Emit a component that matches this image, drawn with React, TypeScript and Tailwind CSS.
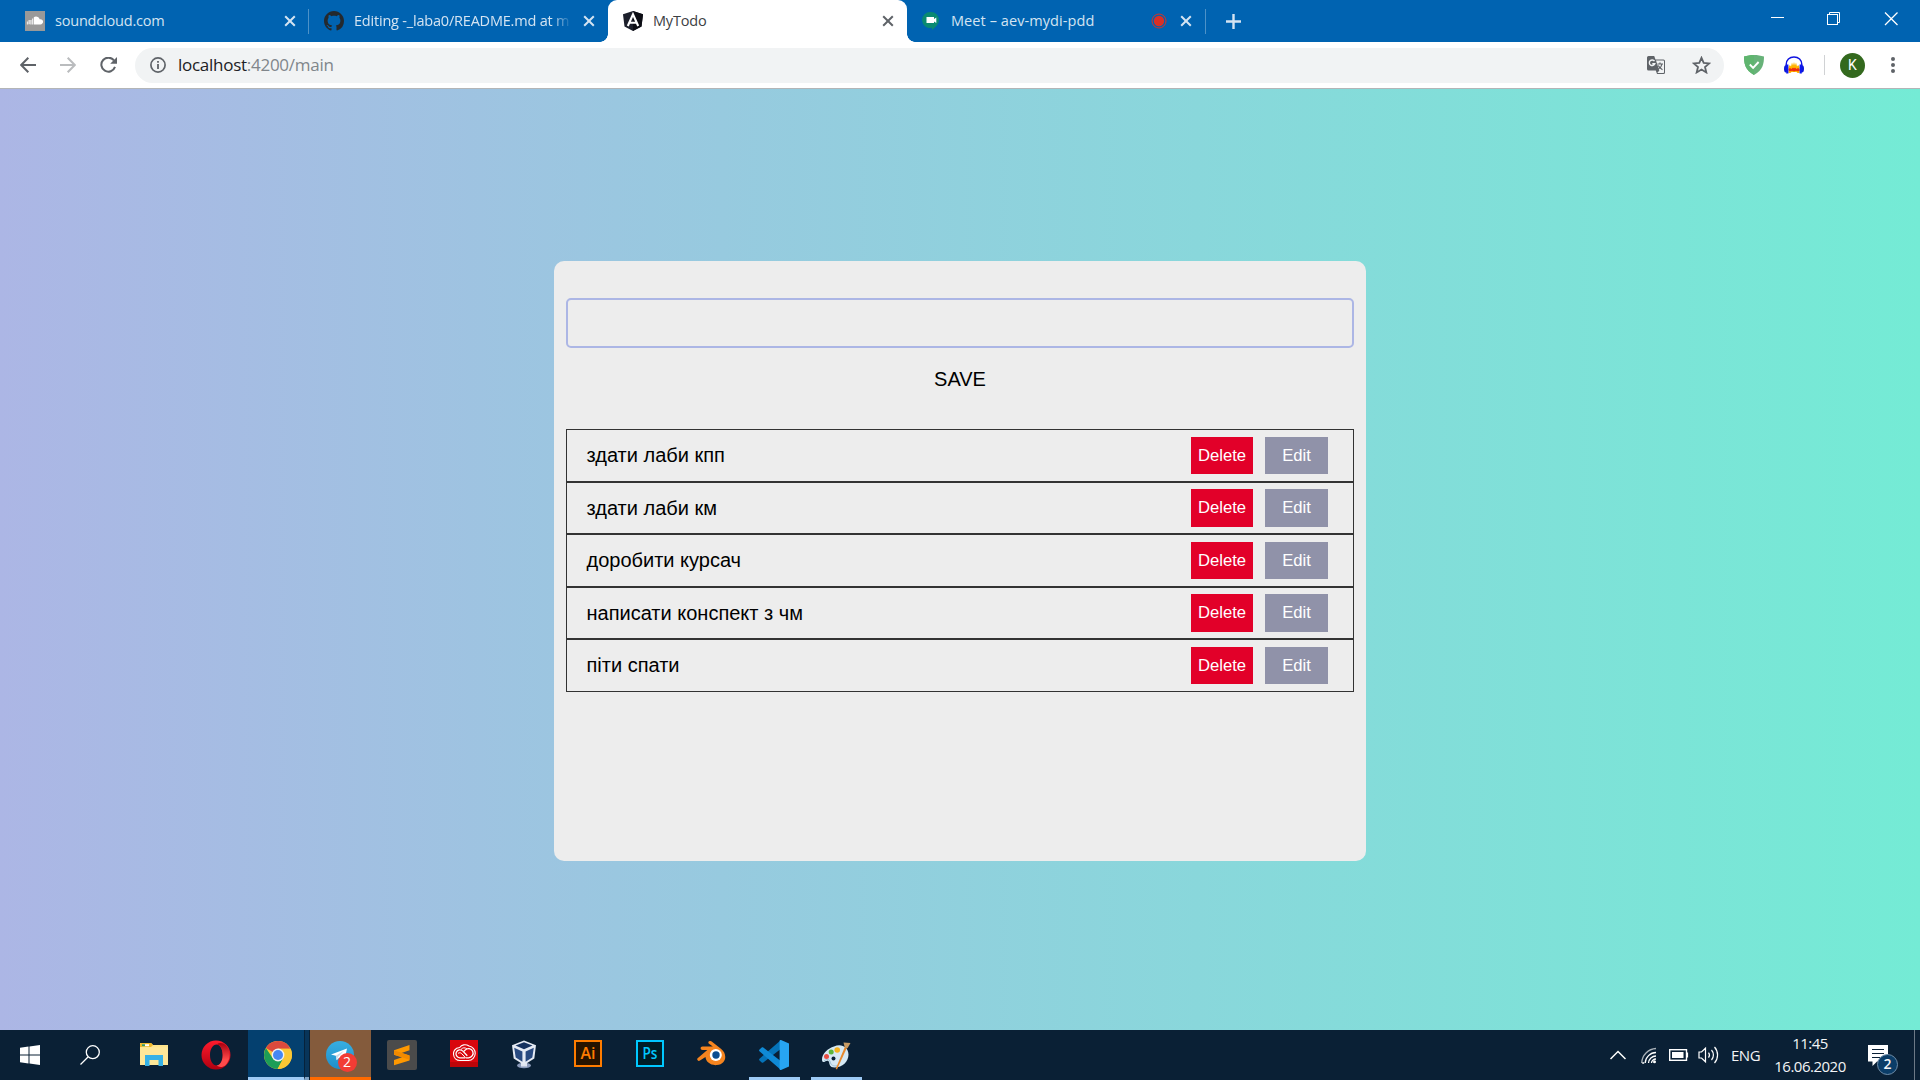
import React from "react";

const todos = ["здати лаби кпп", "здати лаби км", "доробити курсач", "написати конспект з чм", "піти спати"];

const CloseX = ({ color }: { color: string }) => (
  <svg width="12" height="12" viewBox="0 0 12 12" className="shrink-0">
    <path d="M1.2 1.2 L10.8 10.8 M10.8 1.2 L1.2 10.8" stroke={color} strokeWidth="2" />
  </svg>
);

const SoundcloudIcon = () => (
  <svg width="20" height="20" viewBox="0 0 20 20">
    <rect width="20" height="20" fill="#999" />
    <path d="M2.5 10.5v3M4.2 9v4.300M5.900 9v4.500M7.600 7.500v6" stroke="#e8e8e8" strokeWidth="1.3" />
    <path d="M8.800 6.200C11 4.800 14 5.800 14.600 8.300c2-.4 3.500.8 3.500 2.500 0 1.500-1.200 2.600-2.600 2.600H8.800z" fill="#fff" />
  </svg>
);

const GithubIcon = () => (
  <svg width="20" height="20" viewBox="0 0 16 16" fill="#24292e">
    <path d="M8 0C3.580 0 0 3.580 0 8c0 3.540 2.290 6.530 5.470 7.590.4.070.55-.17.55-.38 0-.19-.01-.82-.01-1.490-2.010.37-2.530-.49-2.690-.94-.09-.23-.48-.94-.82-1.130-.28-.15-.68-.52-.01-.53.63-.01 1.080.58 1.230.82.72 1.210 1.870.87 2.330.66.07-.52.28-.87.51-1.070-1.780-.2-3.640-.89-3.640-3.950 0-.87.31-1.590.82-2.150-.08-.2-.36-1.020.08-2.120 0 0 .67-.21 2.200.82.64-.18 1.320-.27 2-.27s1.360.09 2 .27c1.530-1.040 2.200-.82 2.200-.82.44 1.100.16 1.920.08 2.120.51.56.82 1.270.82 2.150 0 3.070-1.870 3.750-3.650 3.950.29.25.54.73.54 1.480 0 1.070-.01 1.930-.01 2.200 0 .21.15.46.55.38A8.010 8.010 0 0 0 16 8c0-4.420-3.580-8-8-8z" />
  </svg>
);

const AngularIcon = () => (
  <svg width="20" height="20" viewBox="0 0 20 20">
    <path d="M10 0 L20 3.200 L18.500 15.500 L10 20 L1.500 15.500 L0 3.200z" fill="#1c1f2b" />
    <path d="M10 0 L20 3.200 L18.500 15.500 L10 20z" fill="#0c0d14" />
    <path d="M4.800 15 L10 3.300 L15.200 15 M6.600 11.700 H13.400" stroke="#fff" strokeWidth="2.100" fill="none" />
  </svg>
);

const MeetIcon = () => (
  <svg width="20" height="20" viewBox="0 0 20 20">
    <path d="M9 1a8 8 0 0 1 8 8c0 4.500-3.500 7-7 10v-2.300A8 8 0 1 1 9 1z" fill="#0a8a72" />
    <path d="M4.500 6h7.500v2l2.300-1.500v5.500L12 10.500V12H4.500z" fill="#fff" />
  </svg>
);

const ToolbarNav = () => (
  <div className="flex w-[135px] shrink-0 items-center pl-5">
    <svg width="16" height="16" viewBox="0 0 16 16" fill="none" stroke="#5f6368" strokeWidth="2"><path d="M16 8H1.500M8.300 .8L1.200 8l7.100 7.200" /></svg>
    <svg className="ml-6" width="16" height="16" viewBox="0 0 16 16" fill="none" stroke="#babcbe" strokeWidth="2"><path d="M0 8h14.500M7.700 .8L14.800 8l-7.100 7.200" /></svg>
    <svg className="ml-6" width="17" height="16" viewBox="0 0 17 16" fill="none"><path d="M14 3.500A7 7 0 1 0 15 9.900" stroke="#5f6368" strokeWidth="2" /><path d="M17 0v6.800h-6.800z" fill="#5f6368" /></svg>
  </div>
);

const TranslateIcon = () => (
  <svg width="18" height="18" viewBox="0 0 18 18">
    <path d="M1.500 0h5.700l1.300 3.500h8a1.500 1.500 0 0 1 1.500 1.500v11.500a1.500 1.500 0 0 1-1.500 1.500H10l-1.200-3.500H1.500A1.500 1.500 0 0 1 0 13V1.500A1.500 1.500 0 0 1 1.500 0z" fill="#5f6368" />
    <path d="M9 4.500h7.300a.7.7 0 0 1 .7.7v11a.7.7 0 0 1-.7.7h-6l2-2.400z" fill="#f1f3f4" />
    <path d="M7.500 5.200A2.800 2.800 0 1 0 7.800 7.700H5.300" stroke="#f1f3f4" strokeWidth="1.400" fill="none" />
    <path d="M10.500 8h5.500M13 6.500V8M15 8c-.4 2.500-2 4-3.600 5M11.300 9.500c.7 1.700 2.500 3.400 4.200 4.200" stroke="#5f6368" strokeWidth="1.200" fill="none" />
  </svg>
);

const StarIcon = () => (
  <svg width="19" height="18" viewBox="0 0 19 18"><path d="M9.500 1.800l2.200 5.100 5.500.5-4.200 3.600 1.300 5.400-4.800-2.900-4.800 2.900L6 11 1.800 7.400l5.500-.5z" stroke="#5f6368" strokeWidth="1.800" fill="none" /></svg>
);

const ShieldIcon = () => (
  <svg width="20" height="20" viewBox="0 0 20 20">
    <path d="M10 0c3.300 0 7 .6 10 1.600C20 8.500 19 15 10 20 1 15 0 8.500 0 1.600 3 .6 6.700 0 10 0z" fill="#67b279" />
    <path d="M10 0v20C1 15 0 8.500 0 1.600 3 .6 6.700 0 10 0z" fill="#5fb56f" />
    <path d="M5.800 9.500l3.300 3.300L14.600 7" stroke="#fff" strokeWidth="1.900" fill="none" />
  </svg>
);

const AudacityIcon = () => (
  <svg width="20" height="19" viewBox="0 0 20 19">
    <path d="M4.500 17V11l1.300-2 1.200 1.500 1-4 1 3L10 6l1 3.500 1-3 1 4 1.200-1.500L15.500 11v6h-2l-1-1h-5l-1 1z" fill="#ffb400" />
    <path d="M4.500 13l1.500-1 1.500 1 1.500-1.500 1 1 1-1 1.500 1.500 1.500-1 1.500 1v2l-2 .3-1.500-.5-2 .7-2-.7-1.500.5-1.500-.3z" fill="#f02a10" />
    <path d="M2.200 11V8.500C2.200 4 5.500 1 10 1s7.800 3 7.800 7.500V11" stroke="#1014e0" strokeWidth="1.500" fill="none" />
    <ellipse cx="1.800" cy="12.800" rx="1.800" ry="3.600" fill="#0c18d8" /><rect x="2.200" y="8.500" width="2.200" height="9" fill="#0c18f0" />
    <ellipse cx="18.200" cy="12.800" rx="1.800" ry="3.600" fill="#0c18d8" /><rect x="15.600" y="8.500" width="2.200" height="9" fill="#0c18f0" />
  </svg>
);

const Cell = ({ children, className = "" }: { children: React.ReactNode; className?: string }) => (
  <div className={"flex h-[50px] w-[62px] shrink-0 items-center justify-center " + className}>{children}</div>
);

const ExplorerIcon = () => (
  <svg width="28" height="24" viewBox="0 0 28 24">
    <path d="M0 0h11l2 2h15v20H0z" fill="#fde38b" />
    <path d="M0 1.200Q0 0 1.200 0H11l2 2-2 2H0z" fill="#f0b82a" /><rect x="2" y="1.200" width="7" height="2" fill="#fff" /><rect x="2" y="1.200" width="3" height="2" fill="#3f9a5a" />
    <path d="M0 4.200h28V22H0z" fill="#fee798" />
    <path d="M5 23V12h18v11h-4.500v-6h-9v6z" fill="#36b1e6" />
  </svg>
);

const OperaIcon = () => (
  <svg width="30" height="30" viewBox="0 0 30 30">
    <defs>
      <linearGradient id="op1" x1="0" y1="0" x2="0" y2="1"><stop offset="0" stopColor="#ff1b2d" /><stop offset="1" stopColor="#b00010" /></linearGradient>
      <linearGradient id="op2" x1="0" y1="0" x2="0" y2="1"><stop offset="0" stopColor="#a8000f" /><stop offset=".7" stopColor="#ff4a4a" /></linearGradient>
    </defs>
    <path fillRule="evenodd" d="M15 .5a14.500 14.500 0 1 0 0 29 14.500 14.500 0 1 0 0-29zM15.500 4.500c3.500 0 6.200 4.500 6.200 10.500S19 25.500 15.500 25.500 9 21 9 15s3-10.500 6.500-10.500z" fill="url(#op1)" />
    <path d="M15.500 4.500c3.500 0 6.200 4.500 6.200 10.500S19 25.500 15.500 25.500c3 2.200 6.500 1.800 9.200-.6a14.500 14.500 0 0 0 0-19.800c-2.700-2.500-6.200-2.800-9.200-.6z" fill="url(#op2)" />
  </svg>
);

const ChromeIcon = () => (
  <svg width="28" height="28" viewBox="0 0 28 28">
    <circle cx="14" cy="14" r="14" fill="#fbc734" />
    <path d="M14 14L1.900 7A14 14 0 0 1 26.500 7.800H14z" fill="#dc4a3d" />
    <path d="M1.900 7A14 14 0 0 0 13.600 28l5.800-10.800L14 14 8.600 17.100z" fill="#1c9e57" />
    <path d="M26.500 7.800A14 14 0 0 1 13.600 28l5.800-10.800L14 7.800z" fill="#fbc734" />
    <circle cx="14" cy="14" r="6.400" fill="#f1f1f1" /><circle cx="14" cy="14" r="5" fill="#4587f3" />
  </svg>
);

const TelegramIcon = () => (
  <div className="relative h-7 w-7">
    <svg width="28" height="28" viewBox="0 0 28 28">
      <defs><linearGradient id="tg" x1="0" y1="0" x2="0" y2="1"><stop offset="0" stopColor="#37aee2" /><stop offset="1" stopColor="#1e8fca" /></linearGradient></defs>
      <circle cx="14" cy="14" r="14" fill="url(#tg)" />
      <path d="M5 13.500L21 7.500l-2.800 13-5-3.700-2.500 2.400-.9-4.500z" fill="#fff" /><path d="M9.800 14.700L18 9.800l-6 6.200-1.300 3.200z" fill="#c8daea" />
    </svg>
    <span className="absolute left-[12px] top-[12px] flex h-[19px] w-[19px] items-center justify-center rounded-full bg-[#f23c34] font-['Open_Sans'] text-[14px] leading-none text-white">2</span>
  </div>
);

const SublimeIcon = () => (
  <svg width="30" height="30" viewBox="0 0 30 30"><rect width="30" height="30" rx="2" fill="#4b4b4b" />
    <path d="M7 10.200L22.500 5v5.300L14.500 13l8 2.600v4.900L7 25.200V20l8-2.700L7 14.700z" fill="#ff9800" /><path d="M7 10.200v4.500l15.500 5v-4.100z" fill="#f28a00" />
  </svg>
);

const CreativeCloudIcon = () => (
  <svg width="28" height="27" viewBox="0 0 28 27"><rect width="28" height="27" fill="#d9060d" /><rect y="22" width="28" height="5" fill="#bb0509" />
    <g fill="none" stroke="#fff">
      <path d="M10 20.500h8.500a7.300 7.300 0 0 0 .5-14.500c-3.500-2.300-7.500-1.300-9.300 1.500-5.200.3-6.400 4.300-6.200 6.800.3 3.700 3 6.200 6.500 6.200z" strokeWidth="1.100" />
      <path d="M16 17.800h2.500a4.600 4.600 0 1 0-3.400-7.700l-1 1.100M15.500 17.800h-5.600a4 4 0 1 1 3-6.700l4.400 4.700" strokeWidth="1.300" />
      <path d="M8 13.500c1-1 2.500-1 3.500 0l4 4.200M11 9.500c1.500-2 4-2.300 6-.5" strokeWidth="1" />
    </g>
  </svg>
);

const VirtualBoxIcon = () => (
  <svg width="26" height="30" viewBox="0 0 26 30">
    <ellipse cx="13" cy="25.500" rx="7" ry="2.800" fill="#8c9bbb" /><path d="M10 22h6v4.500h-6z" fill="#dfe5f0" />
    <path d="M13 .5L25 5.200 23.300 18.500 13 25 2.700 18.500 1 5.200z" fill="#e6ebf4" />
    <path d="M13 2.200l8.500 3.200L13 9.300 4.500 5.400z" fill="#16325f" />
    <path d="M3.200 7.700l8.200 3.800v10.300l-6.700-4.300zM22.800 7.700l-8.200 3.800v10.300l6.700-4.300z" fill="#294a80" />
  </svg>
);

const AdobeIcon = ({ label, color, bg }: { label: string; color: string; bg: string }) => (
  <svg width="28" height="27" viewBox="0 0 28 27"><rect x="1" y="1" width="26" height="25" fill={bg} stroke={color} strokeWidth="2" />
    <text x="14" y="19" textAnchor="middle" fontFamily="Open Sans" fontSize="16" fontWeight="600" fill={color} textLength="15" lengthAdjust="spacingAndGlyphs">{label}</text></svg>
);

const BlenderIcon = () => (
  <svg width="29" height="25" viewBox="0 0 29 25">
    <path d="M11.500.8c1-1.200 2.300-1 3.200-.2l9.500 7.500c6 4.500 6 15-4.500 16-6.500.5-11-3.500-11.200-8L3 19.500c-1.700 1.200-3.700-.7-2.400-2.300L10.300 9H5.500C3 9 3 5.500 5.500 5.500h10.300L12 2.800c-.7-.6-.8-1.300-.5-2z" fill="#f5841f" />
    <circle cx="18.800" cy="14" r="6" fill="#fff" /><circle cx="19" cy="14" r="3.700" fill="#0c4d91" />
  </svg>
);

const VsCodeIcon = () => (
  <svg width="30" height="30" viewBox="0 0 30 30">
    <path d="M22 0v8.800L4.300 22.500c-.6.400-1.200.3-1.600 0L.5 20.500c-.6-.6-.6-1.300 0-1.800z" fill="#0573b8" />
    <path d="M22 30v-8.800L4.300 7.500c-.6-.4-1.200-.3-1.600 0L.5 9.500c-.6.600-.6 1.300 0 1.800z" fill="#0f8ad6" />
    <path d="M22 0l8 3.500v23L22 30c-.8 0-1.400-.4-1.400-1V1c0-.6.600-1 1.400-1z" fill="#27a5f3" />
  </svg>
);

const PaintIcon = () => (
  <svg width="30" height="29" viewBox="0 0 30 29">
    <path d="M13 5.500C20 2 27.500 6 27.500 13.500c0 7-6 13-14 13-5 0-5-3.500-5.500-5.500-.4-1.700-2.500-1.600-3.500-.8-3 2-3.500 0-3.500-2C1 13 7 7 13 5.500z" fill="#d6e9f4" />
    <path d="M3 20c3-2.500 5.500-2 6.200 1 .6 3 3 4.500 7 3.700" stroke="#9fc3d9" fill="none" />
    <circle cx="5.500" cy="15.500" r="2.500" fill="#e94f43" /><circle cx="10.200" cy="11" r="2.500" fill="#5cb63c" /><circle cx="16.200" cy="9" r="2.800" fill="#f7b320" /><circle cx="12.500" cy="17.500" r="2" fill="#0a2035" />
    <path d="M16 28.500l-1.300-.7L24 5.500l2 1z" fill="#e8892c" /><path d="M22.500 1.500L29.500 2l-3 5.200-2.800-1z" fill="#c79b64" />
  </svg>
);

const TabTitle = ({ children, className = "" }: { children: React.ReactNode; className?: string }) => (
  <span className={"flex-1 overflow-hidden whitespace-nowrap pl-2.5 text-[14.500px] leading-5 " + className}>{children}</span>
);

export default function App() {
  return (
    <div className="flex h-[1080px] w-[1920px] flex-col overflow-hidden font-['Open_Sans',sans-serif]">
      <header className="flex h-[42px] shrink-0 bg-[#0063b1] pl-2.5 text-[#d4e4f2]">
        <div className="flex w-[299px] items-center pl-[15px] pr-[13px]">
          <SoundcloudIcon /><TabTitle className="tracking-[-0.200px]">soundcloud.com</TabTitle><CloseX color="#d4e4f2" />
          <i className="ml-[12px] -mr-[13px] h-[25px] w-px bg-[#4d92c8]" />
        </div>
        <div className="flex w-[299px] items-center pl-[15px] pr-[13px]">
          <GithubIcon />
          <TabTitle className="mr-[9px] tracking-[-0.200px] [mask-image:linear-gradient(to_right,#000_90%,transparent_99%)]">Editing -_laba0/README.md at m</TabTitle>
          <CloseX color="#d4e4f2" />
        </div>
        <div className="relative flex w-[299px] items-center rounded-t-[9px] bg-white pl-[15px] pr-[13px] text-[#3c4043]">
          <i className="absolute -left-2 bottom-0 h-2 w-2 bg-[radial-gradient(circle_at_0_0,transparent_7.500px,#fff_8px)]" />
          <i className="absolute -right-2 bottom-0 h-2 w-2 bg-[radial-gradient(circle_at_100%_0,transparent_7.500px,#fff_8px)]" />
          <AngularIcon /><TabTitle className="tracking-[-0.200px]">MyTodo</TabTitle><CloseX color="#5f6368" />
        </div>
        <div className="flex w-[299px] items-center pl-[15px] pr-[14px]">
          <MeetIcon /><TabTitle className="-ml-px tracking-[0.080px]">Meet – aev-mydi-pdd</TabTitle>
          <svg width="16" height="16" viewBox="0 0 16 16" className="mr-[13px]"><circle cx="8" cy="8" r="7" fill="none" stroke="#d93025" /><circle cx="8" cy="8" r="5.200" fill="#d93025" /></svg>
          <CloseX color="#d4e4f2" />
          <i className="ml-[13px] -mr-[14px] h-[25px] w-px bg-[#4d92c8]" />
        </div>
        <svg className="ml-5 mt-[13.500px]" width="15" height="15" viewBox="0 0 15 15"><path d="M7.500 0v15M0 7.500h15" stroke="#d4e4f2" strokeWidth="2.400" /></svg>
        <svg className="ml-auto mr-[22px] mt-3" width="127" height="14" viewBox="0 0 127 14" fill="none" stroke="#fff">
          <path d="M0 5.500h13M58.500 2.500V.5h10v10h-2.500" /><rect x="56.500" y="2.500" width="10" height="10" />
          <path d="M114 .5l12.500 12.500M126.500 .5L114 13" strokeWidth="1.300" />
        </svg>
      </header>

      <div className="flex h-[47px] shrink-0 items-center border-b border-[#b3b5b7] bg-white">
        <ToolbarNav />
        <div className="flex h-[35px] w-[1589px] shrink-0 items-center rounded-full bg-[#f1f3f4] pl-[15px] pr-[13px]">
          <svg width="16" height="16" viewBox="0 0 16 16"><circle cx="8" cy="8" r="7.100" fill="none" stroke="#5f6368" strokeWidth="1.700" /><path d="M8 7v5M8 4v1.800" stroke="#5f6368" strokeWidth="1.800" /></svg>
          <span className="ml-3 flex-1 text-[17px] leading-6 tracking-[-0.270px] text-[#80868b]"><span className="text-[#202124]">localhost</span>:4200/main</span>
          <TranslateIcon /><span className="w-[27px]" /><StarIcon />
        </div>
        <span className="w-5" /><ShieldIcon /><span className="w-5" /><AudacityIcon />
        <i className="ml-5 h-5 w-px bg-[#d0d2d4]" />
        <span className="ml-[15px] flex h-[25px] w-[25px] items-center justify-center rounded-full bg-[#33691e] font-['Roboto'] text-[14px] text-white">K</span>
        <svg className="ml-[26px]" width="4" height="16" viewBox="0 0 4 16" fill="#5f6368"><circle cx="2" cy="2" r="2" /><circle cx="2" cy="8" r="2" /><circle cx="2" cy="14" r="2" /></svg>
      </div>

      <main className="flex flex-1 justify-center bg-[linear-gradient(to_right,#acb6e5,#74ebd5)] pt-[172px] font-['Liberation_Sans',sans-serif] text-black">
        <section className="flex h-[600px] w-[812px] flex-col rounded-[10px] bg-[#ededed] px-3 pt-[37px] text-[20px]">
          <input className="h-[50px] w-full shrink-0 rounded-[5px] border-2 border-[#acb6e5] px-4 outline-none" />
          <button className="mt-[20px] h-[23px] self-center leading-[23px]">SAVE</button>
          <ul className="mt-[38px]">
            {todos.map((t) => (
              <li key={t} className="flex h-[52.500px] items-center border border-[#333] pl-[19.500px] pr-[25px]">
                <span className="flex-1">{t}</span>
                <button className="h-[37.500px] w-[62px] bg-[#e20029] text-[16.670px] text-white">Delete</button>
                <button className="ml-3 h-[37.500px] w-[63px] bg-[#9092a9] text-[16.670px] text-white">Edit</button>
              </li>
            ))}
          </ul>
        </section>
      </main>

      <footer className="flex h-[50px] shrink-0 items-center bg-[#0a2035] text-[#f2f4f6]">
        <div className="flex w-[60px] justify-center">
          <svg width="20" height="20" viewBox="0 0 20 20" fill="#fff"><path d="M0 2.800L8.500 1.600v7.900H0zM9.500 1.400L20 0v9.500H9.500zM0 10.500h8.500v7.900L0 17.200zM9.500 10.500H20V20L9.500 18.600z" /></svg>
        </div>
        <div className="flex w-[63px] justify-center pr-1">
          <svg width="20" height="20" viewBox="0 0 20 20" fill="none" stroke="#fff" strokeWidth="1.300"><circle cx="12.800" cy="7.200" r="6.500" /><path d="M8 12L.5 19.500" /></svg>
        </div>
        <Cell><ExplorerIcon /></Cell>
        <Cell><OperaIcon /></Cell>
        <div className="flex w-[63px] pl-px">
          <div className="flex h-[50px] w-[56px] items-center justify-center border-b-[3px] border-[#9dcaf5] bg-[#04406f] pt-[3px] pl-[3px]"><ChromeIcon /></div>
          <div className="h-[50px] w-[5px] border-b-[3px] border-l border-b-[#7ea3c5] border-l-[#06223c] bg-[#08355a]" />
        </div>
        <div className="flex h-[50px] w-[61px] items-center justify-center border-b-[3px] border-[#ff6a00] bg-[#845b3c] pt-[2px] pr-[2px]"><TelegramIcon /></div>
        <Cell><SublimeIcon /></Cell>
        <Cell className="pb-[3px]"><CreativeCloudIcon /></Cell>
        <Cell className="pr-1"><VirtualBoxIcon /></Cell>
        <Cell className="pb-[3px]"><AdobeIcon label="Ai" color="#ff7c00" bg="#261300" /></Cell>
        <Cell className="pb-[3px]"><AdobeIcon label="Ps" color="#00c8ff" bg="#001d26" /></Cell>
        <Cell className="pb-[3px] pr-[2px]"><BlenderIcon /></Cell>
        <div className="mx-[5.500px] flex h-[50px] w-[51px] items-center justify-center border-b-[3px] border-[#9dcaf5] pt-[3px]"><VsCodeIcon /></div>
        <div className="mx-[5.500px] flex h-[50px] w-[51px] items-center justify-center border-b-[3px] border-[#9dcaf5] pt-[3px]"><PaintIcon /></div>

        <div className="ml-auto flex h-full items-center text-[15px] leading-[23px] tracking-[-0.500px]">
          <svg width="16" height="10" viewBox="0 0 16 10" fill="none" stroke="#fff" strokeWidth="1.500"><path d="M.5 9L8 1.500 15.500 9" /></svg>
          <svg className="ml-[15px]" width="16" height="17" viewBox="0 0 16 17" fill="none" stroke="#fff" strokeWidth="1.300">
            <path d="M.7 16A15 15 0 0 1 15 1.500" opacity=".65" /><path d="M4.200 16A11 11 0 0 1 15 5.500M7.500 16A7.500 7.500 0 0 1 15 9M1.200 16h2" /><path d="M10.500 16c0-2 2-4 4.500-4" /><circle cx="13.500" cy="14.800" r="1.500" fill="#fff" stroke="none" />
          </svg>
          <svg className="ml-3" width="20" height="12" viewBox="0 0 20 12"><rect x=".7" y=".7" width="16.800" height="10.600" fill="none" stroke="#fff" strokeWidth="1.400" /><rect x="3" y="3" width="11.500" height="6" fill="#fff" /><path d="M18.300 3.500v5" stroke="#fff" strokeWidth="1.600" /></svg>
          <svg className="ml-[9px]" width="21" height="18" viewBox="0 0 21 18" fill="none" stroke="#fff" strokeWidth="1.200"><path d="M1 6h2.500L7.500 2.200v13.600L3.500 12H1zM10.500 6.500a4 4 0 0 1 0 5M13.500 4a7.500 7.500 0 0 1 0 10M16.500 1a12 12 0 0 1 0 16" /></svg>
          <span className="ml-3 w-[30px]">ENG</span>
          <div className="ml-[9px] flex h-full w-[80px] flex-col items-center pt-[2px]"><span>11:45</span><span>16.06.2020</span></div>
          <div className="relative ml-[18px] mt-[10px] h-[31px] w-[31px]">
            <svg width="20" height="21" viewBox="0 0 20 21"><path d="M0 0h20v16.500H9L4.500 21v-4.500H0z" fill="#fff" /><path d="M4 4.500h12M4 8.500h12M4 12.500h8" stroke="#0a2035" strokeWidth="1.200" /></svg>
            <span className="absolute left-[9px] top-[9px] flex h-[21px] w-[21px] items-center justify-center rounded-full border border-[#6f8da8] bg-[#0b3d68] text-[14px] font-semibold leading-none tracking-normal">2</span>
          </div>
          <i className="ml-[15px] mr-[5px] h-full w-px bg-[#6c7986]" />
        </div>
      </footer>
    </div>
  );
}
